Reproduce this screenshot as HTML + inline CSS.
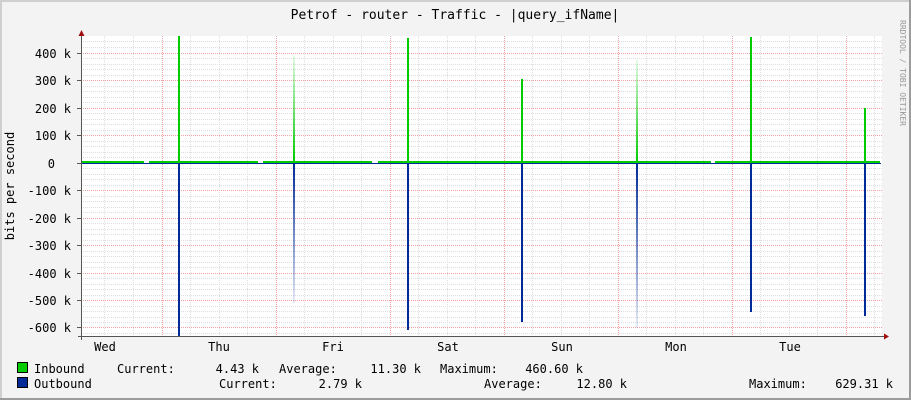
<!DOCTYPE html>
<html><head><style>
html,body{margin:0;padding:0;background:#f3f3f3}
svg{display:block}
text{font-family:"DejaVu Sans Mono","Liberation Mono",monospace;fill:#000}
</style></head><body>
<svg width="911" height="400" xmlns="http://www.w3.org/2000/svg">
<defs>
<linearGradient id="gf" x1="0" y1="0" x2="0" y2="1"><stop offset="0" stop-color="#00cc00" stop-opacity="0.1"/><stop offset="1" stop-color="#00cc00"/></linearGradient>
<linearGradient id="bf" x1="0" y1="0" x2="0" y2="1"><stop offset="0" stop-color="#002a97"/><stop offset="1" stop-color="#002a97" stop-opacity="0.1"/></linearGradient>
</defs>
<rect x="0" y="0" width="911" height="400" fill="#f3f3f3"/>
<rect x="0" y="0" width="911" height="2" fill="#cfcfcf"/>
<rect x="0" y="0" width="2" height="400" fill="#cfcfcf"/>
<rect x="909" y="0" width="2" height="400" fill="#9c9c9c"/>
<rect x="0" y="398" width="911" height="2" fill="#9c9c9c"/>
<rect x="81" y="36" width="801" height="300" fill="#fff"/>
<g stroke="#dedede" stroke-dasharray="1,1" stroke-width="1">
<path d="M81 41.5H882M81 47.5H882M81 58.5H882M81 64.5H882M81 69.5H882M81 75.5H882M81 86.5H882M81 91.5H882M81 97.5H882M81 102.5H882M81 113.5H882M81 119.5H882M81 124.5H882M81 130.5H882M81 141.5H882M81 146.5H882M81 152.5H882M81 157.5H882M81 168.5H882M81 174.5H882M81 179.5H882M81 185.5H882M81 196.5H882M81 201.5H882M81 207.5H882M81 212.5H882M81 223.5H882M81 229.5H882M81 234.5H882M81 240.5H882M81 251.5H882M81 256.5H882M81 262.5H882M81 267.5H882M81 278.5H882M81 284.5H882M81 289.5H882M81 295.5H882M81 306.5H882M81 311.5H882M81 317.5H882M81 322.5H882M81 333.5H882"/>
<path d="M104.5 36V336M133.5 36V336M190.5 36V336M219.5 36V336M247.5 36V336M304.5 36V336M333.5 36V336M361.5 36V336M418.5 36V336M447.5 36V336M475.5 36V336M532.5 36V336M561.5 36V336M589.5 36V336M646.5 36V336M675.5 36V336M703.5 36V336M760.5 36V336M789.5 36V336M817.5 36V336M874.5 36V336"/>
</g>
<g stroke="#f0a0a0" stroke-dasharray="1,1" stroke-width="1">
<path d="M81 53.5H882M81 80.5H882M81 108.5H882M81 135.5H882M81 190.5H882M81 218.5H882M81 245.5H882M81 273.5H882M81 300.5H882M81 327.5H882"/>
<path d="M162.5 36V336M276.5 36V336M390.5 36V336M504.5 36V336M618.5 36V336M732.5 36V336M846.5 36V336"/>
</g>
<rect x="178" y="36" width="2" height="127" fill="#00cc00"/>
<rect x="293" y="55" width="2" height="108" fill="url(#gf)"/>
<rect x="407" y="38" width="2" height="125" fill="#00cc00"/>
<rect x="521" y="79" width="2" height="84" fill="#00cc00"/>
<rect x="636" y="60" width="2" height="103" fill="url(#gf)"/>
<rect x="750" y="37" width="2" height="126" fill="#00cc00"/>
<rect x="864" y="108" width="2" height="55" fill="#00cc00"/>
<rect x="178" y="163" width="2" height="173" fill="#002a97"/>
<rect x="293" y="163" width="2" height="140" fill="url(#bf)"/>
<rect x="407" y="163" width="2" height="167" fill="#002a97"/>
<rect x="521" y="163" width="2" height="159" fill="#002a97"/>
<rect x="636" y="163" width="2" height="165" fill="url(#bf)"/>
<rect x="750" y="163" width="2" height="149" fill="#002a97"/>
<rect x="864" y="163" width="2" height="153" fill="#002a97"/>
<rect x="81" y="163" width="800" height="1" fill="#002a97"/>
<path d="M81 162H144M149 162H258M263 162H372M378 162H711M715 162H880" stroke="#00cc00" stroke-width="2"/>
<path d="M81.5 36V340M78 336.5H884" stroke="#555" stroke-width="1"/>
<path d="M81.5 30L84.5 36H78.5Z" fill="#a01010"/>
<path d="M884 333.5L889 336.5L884 339.5Z" fill="#a01010"/>
<g stroke="#555"><path d="M77 53.5H81M77 80.5H81M77 108.5H81M77 135.5H81M77 163.5H81M77 190.5H81M77 218.5H81M77 245.5H81M77 273.5H81M77 300.5H81M77 327.5H81"/></g>
<g font-size="12" text-anchor="end" style="font-family:'DejaVu Sans','Liberation Sans',sans-serif">
<text x="71" y="58">400  k</text><text x="71" y="85">300  k</text><text x="71" y="113">200  k</text><text x="71" y="140">100  k</text><text x="55" y="168">0</text>
<text x="71" y="195">-100  k</text><text x="71" y="223">-200  k</text><text x="71" y="250">-300  k</text><text x="71" y="278">-400  k</text><text x="71" y="305">-500  k</text><text x="71" y="332">-600  k</text>
</g>
<text x="14" y="186" font-size="12" text-anchor="middle" transform="rotate(-90 14 186)">bits per second</text>
<g font-size="12" text-anchor="middle">
<text x="105" y="351">Wed</text><text x="219" y="351">Thu</text><text x="333" y="351">Fri</text><text x="448" y="351">Sat</text><text x="562" y="351">Sun</text><text x="676" y="351">Mon</text><text x="790" y="351">Tue</text>
</g>
<text x="455" y="19" font-size="13" text-anchor="middle">Petrof - router - Traffic - |query_ifName|</text>
<text x="900" y="20" font-size="8" style="fill:#999" transform="rotate(90 900 20)">RRDTOOL / TOBI OETIKER</text>
<rect x="17.5" y="362.5" width="10" height="10" fill="#00cc00" stroke="#000"/>
<rect x="17.5" y="377.5" width="10" height="10" fill="#002a97" stroke="#000"/>
<g font-size="12">
<text x="34" y="373">Inbound</text>
<text x="117" y="373">Current:</text>
<text x="259" y="373" text-anchor="end">4.43 k</text>
<text x="279" y="373">Average:</text>
<text x="421" y="373" text-anchor="end">11.30 k</text>
<text x="440" y="373">Maximum:</text>
<text x="583" y="373" text-anchor="end">460.60 k</text>
<text x="34" y="388">Outbound</text>
<text x="219" y="388">Current:</text>
<text x="362" y="388" text-anchor="end">2.79 k</text>
<text x="484" y="388">Average:</text>
<text x="627" y="388" text-anchor="end">12.80 k</text>
<text x="749" y="388">Maximum:</text>
<text x="893" y="388" text-anchor="end">629.31 k</text>
</g>
</svg>
</body></html>
